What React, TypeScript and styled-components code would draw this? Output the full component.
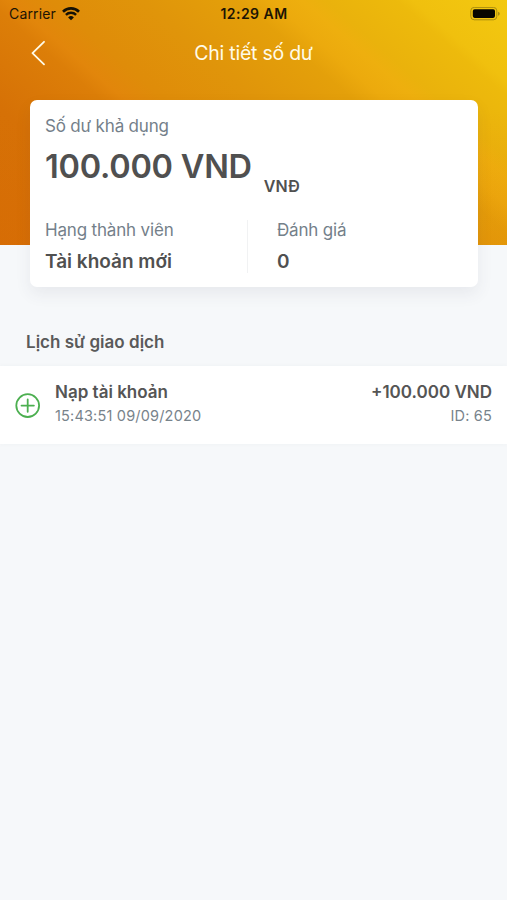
import React from "react";
import styled, { createGlobalStyle } from "styled-components";

const GlobalStyle = createGlobalStyle`
  * { box-sizing: border-box; }
  body {
    margin: 0;
    background: #f6f8fa;
    font-family: Inter, "Liberation Sans", sans-serif;
  }
`;

const Screen = styled.main`
  min-height: 900px;
  background: #f6f8fa;
`;

const Hero = styled.header`
  height: 245px;
  background:
    linear-gradient(180deg, transparent 45%, rgba(225, 100, 5, 0.13) 100%),
    linear-gradient(
      41deg,
      #d56e05 0%,
      #d67106 20%,
      #dc7e08 34%,
      #e2860b 37%,
      #df8c09 42%,
      #e0950a 54%,
      #e4a00a 66%,
      #ecaa0d 70%,
      #eeaf0e 74%,
      #eab20c 77%,
      #edba0c 86%,
      #f0c00e 88%,
      #f3c910 100%
    );
`;

const StatusBar = styled.div`
  display: grid;
  grid-template-columns: 1fr auto 1fr;
  align-items: center;
  height: 27px;
  padding: 0 7px 0 9px;
  color: #1c1404;
`;

const Carrier = styled.div`
  display: flex;
  align-items: center;
  gap: 6px;
  font-size: 14px;
  line-height: 27px;
  letter-spacing: 0.15px;
`;

const Clock = styled.time`
  margin-right: 1px;
  font-size: 14px;
  font-weight: 600;
  letter-spacing: 0.45px;
`;

const Battery = styled.svg`
  justify-self: end;
`;

const NavBar = styled.nav`
  display: grid;
  grid-template-columns: 76px 1fr 76px;
  align-items: center;
  height: 52px;
`;

const BackButton = styled.button`
  display: flex;
  justify-content: center;
  padding: 0;
  border: 0;
  background: none;
`;

const Title = styled.h1`
  margin: 0;
  text-align: center;
  font-size: 19.5px;
  font-weight: 400;
  line-height: 26px;
  letter-spacing: -0.25px;
  color: #fffbe8;
`;

const Card = styled.section`
  height: 187px;
  margin: -144.6px 29.5px 0 30px;
  padding: 13.6px 15px;
  border-radius: 7px;
  background: #fff;
  box-shadow: 0 7px 16px rgba(60, 70, 85, 0.08);
`;

const Label = styled.div`
  font-size: 17px;
  line-height: 24px;
  letter-spacing: -0.17px;
  color: #74808a;
`;

const Balance = styled.div`
  display: flex;
  align-items: flex-end;
  gap: 12px;
  height: 63px;
  padding-top: 7px;
  color: #505050;
`;

const Amount = styled.strong`
  align-self: flex-start;
  font-size: 32.5px;
  font-weight: 580;
  line-height: 44px;
  letter-spacing: -0.24px;
`;

const Currency = styled.span`
  margin-bottom: 5px;
  font-size: 16px;
  font-weight: 580;
  line-height: 20px;
`;

const Stats = styled.div`
  display: grid;
  grid-template-columns: 202px 1fr;
  height: 53px;
  margin-top: 19px;
`;

const Stat = styled.div<{ $divided?: boolean }>`
  padding-left: ${(p) => (p.$divided ? "29px" : "0")};
  border-left: ${(p) => (p.$divided ? "1px solid #f1f2f3" : "0")};

  > ${Label} {
    margin-top: -2px;
  }
`;

const StatValue = styled.div`
  margin-top: 9px;
  font-size: 19px;
  font-weight: 580;
  line-height: 22px;
  color: #505050;
`;

const SectionTitle = styled.h2`
  margin: 42.6px 26px 12px;
  font-size: 17px;
  font-weight: 580;
  line-height: 24px;
  letter-spacing: 0.02px;
  color: #5a5a5a;
`;

const Transaction = styled.article`
  display: grid;
  grid-template-columns: 25px 1fr auto;
  column-gap: 15px;
  align-items: center;
  height: 78px;
  padding: 0 15px;
  background: #fff;
  box-shadow: 0 0 5px rgba(60, 70, 85, 0.04);
`;

const Entry = styled.div<{ $end?: boolean }>`
  margin-top: -2px;
  text-align: ${(p) => (p.$end ? "right" : "left")};
`;

const EntryTitle = styled.div`
  font-size: 17px;
  font-weight: 580;
  line-height: 24px;
  color: #555;
`;

const EntryMeta = styled.div`
  font-size: 14.5px;
  line-height: 24px;
  letter-spacing: 0.18px;
  color: #78838b;
`;

export default function App() {
  return (
    <>
      <GlobalStyle />
      <Screen>
        <Hero>
          <StatusBar>
            <Carrier>
              <span>Carrier</span>
              <svg width="18" height="14" viewBox="0 0 18 14" fill="none" stroke="#151105">
                <path d="M1 4.7a11.4 11.4 0 0 1 16 0" strokeWidth="2.6" />
                <path d="M3.9 7.8a7.2 7.2 0 0 1 10.2 0" strokeWidth="2.4" />
                <path d="M9 13.3 6.1 10.4a4.1 4.1 0 0 1 5.8 0Z" fill="#151105" stroke="none" />
              </svg>
            </Carrier>
            <Clock>12:29 AM</Clock>
            <Battery width="30" height="14" viewBox="0 0 30 14">
              <rect x="0.8" y="0.4" width="26" height="12.4" rx="3.4" fill="none" stroke="#a98d10" />
              <rect x="2.8" y="2.3" width="22.2" height="8.6" rx="1.8" fill="#080700" />
              <path d="M28 4.8q1.8.5 1.8 2T28 8.8Z" fill="#a98d10" />
            </Battery>
          </StatusBar>
          <NavBar>
            <BackButton aria-label="Back">
              <svg width="14" height="26" viewBox="0 0 14 26" fill="none" stroke="#fffbe8" strokeWidth="1.8" strokeLinecap="round" strokeLinejoin="round">
                <path d="M13 1.8 1.5 13.2 13 24.3" />
              </svg>
            </BackButton>
            <Title>Chi tiết số dư</Title>
          </NavBar>
        </Hero>
        <Card>
          <Label>Số dư khả dụng</Label>
          <Balance>
            <Amount>100.000 VND</Amount>
            <Currency>VNĐ</Currency>
          </Balance>
          <Stats>
            <Stat>
              <Label>Hạng thành viên</Label>
              <StatValue>Tài khoản mới</StatValue>
            </Stat>
            <Stat $divided>
              <Label>Đánh giá</Label>
              <StatValue>0</StatValue>
            </Stat>
          </Stats>
        </Card>
        <SectionTitle>Lịch sử giao dịch</SectionTitle>
        <Transaction>
          <svg width="25" height="26" viewBox="0 0 25 26" fill="none" stroke="#4caf50" strokeWidth="1.8" strokeLinecap="round">
            <circle cx="12.7" cy="13.6" r="11.4" />
            <path d="M12.7 7.4v12.4M6.5 13.6h12.4" />
          </svg>
          <Entry>
            <EntryTitle>Nạp tài khoản</EntryTitle>
            <EntryMeta>15:43:51 09/09/2020</EntryMeta>
          </Entry>
          <Entry $end>
            <EntryTitle>+100.000 VND</EntryTitle>
            <EntryMeta>ID: 65</EntryMeta>
          </Entry>
        </Transaction>
      </Screen>
    </>
  );
}
